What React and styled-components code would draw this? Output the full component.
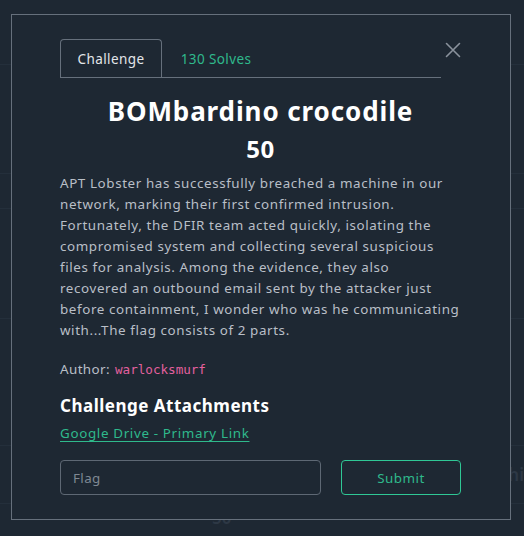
import React from 'react';
import styled, { createGlobalStyle } from 'styled-components';

const GlobalStyle = createGlobalStyle`
  html, body {
    margin: 0;
    padding: 0;
    background: #1e2833;
    width: 524px;
    height: 536px;
    overflow: hidden;
  }
  * { box-sizing: border-box; }
`;

const Page = styled.div`
  position: relative;
  width: 524px;
  height: 536px;
  background: #1e2833;
  font-family: 'Noto Sans', 'DejaVu Sans', sans-serif;
`;

/* faint table of challenges behind the dialog */
const Backdrop = styled.div`
  display: flex;
  flex-direction: column;
  opacity: 0.5;
`;

const BgRow = styled.div`
  height: ${p => p.h}px;
  border-bottom: ${p => (p.last ? 'none' : '1px solid #2a3644')};
  display: flex;
  align-items: center;
  justify-content: ${p => p.align || 'flex-start'};
  padding: 0 ${p => p.pad || 0}px;
  color: #3d4958;
  font-size: 17px;
  font-weight: 600;
`;

const Modal = styled.div`
  position: absolute;
  top: 14px;
  left: 11px;
  width: 500px;
  height: 506px;
  border: 1px solid #66707c;
  background: #1e2833;
  padding: 24px 49px 0 48px;
  display: flex;
  flex-direction: column;
`;

const Header = styled.div`
  display: flex;
  align-items: flex-start;
  gap: 4px;
`;

const Tabs = styled.div`
  flex: 1;
  display: flex;
  align-items: flex-end;
  border-bottom: 1px solid #66707c;
  height: 39px;
`;

const Tab = styled.div`
  height: 38px;
  display: flex;
  align-items: center;
  justify-content: center;
  width: ${p => p.w}px;
  font-size: 13.5px;
  letter-spacing: 0.4px;
  color: ${p => (p.active ? '#e3e6ea' : '#2fb98c')};
  border: 1px solid ${p => (p.active ? '#66707c' : 'transparent')};
  border-bottom: none;
  border-radius: 4px 4px 0 0;
`;

const Close = styled.button`
  width: 16px;
  height: 16px;
  margin-top: 3px;
  border: none;
  background: none;
  padding: 0;
  display: flex;
  align-items: center;
  justify-content: center;
  cursor: pointer;
`;

const Title = styled.h2`
  margin: 16px 0 0;
  text-align: center;
  color: #ffffff;
  font-size: 26px;
  font-weight: 700;
  line-height: 34px;
  letter-spacing: 0.9px;
`;

const Points = styled.div`
  text-align: center;
  color: #ffffff;
  font-size: 24px;
  font-weight: 700;
  line-height: 30px;
  margin-top: 6px;
  letter-spacing: 0.5px;
`;

const Description = styled.p`
  margin: 9px 0 0;
  color: #b9bfc7;
  font-size: 13.4px;
  line-height: 21px;
  letter-spacing: 0.6px;
`;

const Author = styled.div`
  margin-top: 18px;
  color: #b9bfc7;
  font-size: 13.4px;
  line-height: 20px;
  letter-spacing: 0.4px;
  display: flex;
  align-items: baseline;
  gap: 5px;
`;

const Handle = styled.span`
  font-family: 'DejaVu Sans Mono', 'Liberation Mono', monospace;
  font-size: 12.6px;
  color: #e3609f;
  letter-spacing: 0;
`;

const SectionTitle = styled.h3`
  margin: 14px 0 0;
  color: #ffffff;
  font-size: 17px;
  font-weight: 700;
  line-height: 24px;
  letter-spacing: 0.5px;
`;

const Link = styled.a`
  margin-top: 5px;
  align-self: flex-start;
  color: #2fb98c;
  font-size: 13.4px;
  line-height: 20px;
  letter-spacing: 0.65px;
  text-decoration: underline;
  text-underline-offset: 3px;
`;

const Form = styled.div`
  margin-top: 17px;
  display: flex;
  gap: 20px;
`;

const Input = styled.input`
  width: 261px;
  height: 35px;
  background: transparent;
  border: 1px solid #5e6874;
  border-radius: 4px;
  padding: 0 12px;
  color: #e3e6ea;
  font-family: inherit;
  font-size: 13.4px;
  letter-spacing: 0.4px;
  outline: none;
  &::placeholder { color: #7f8893; }
`;

const Submit = styled.button`
  width: 120px;
  height: 35px;
  background: transparent;
  border: 1px solid #2fc795;
  border-radius: 4px;
  color: #2fb98c;
  font-family: inherit;
  font-size: 13.4px;
  letter-spacing: 0.5px;
  cursor: pointer;
`;

export default function App() {
  return (
    <Page>
      <GlobalStyle />
      <Backdrop>
        <BgRow h={65} />
        <BgRow h={109} />
        <BgRow h={35} />
        <BgRow h={110} />
        <BgRow h={127} />
        <BgRow h={58} align="flex-end">Chi</BgRow>
        <BgRow h={26} pad={212} last>50</BgRow>
      </Backdrop>
      <Modal>
        <Header>
          <Tabs>
            <Tab active w={102}>Challenge</Tab>
            <Tab w={108}>130 Solves</Tab>
          </Tabs>
          <Close aria-label="Close">
            <svg width="16" height="16" viewBox="0 0 16 16">
              <path d="M1.5 1.5 L14.5 14.5 M14.5 1.5 L1.5 14.5" stroke="#8a929c" strokeWidth="1.6" strokeLinecap="round" />
            </svg>
          </Close>
        </Header>
        <Title>BOMbardino crocodile</Title>
        <Points>50</Points>
        <Description>
          APT Lobster has successfully breached a machine in our network, marking their first confirmed intrusion.
          Fortunately, the DFIR team acted quickly, isolating the compromised system and collecting several suspicious
          files for analysis. Among the evidence, they also recovered an outbound email sent by the attacker just before
          containment, I wonder who was he communicating with...The flag consists of 2 parts.
        </Description>
        <Author>
          Author: <Handle>warlocksmurf</Handle>
        </Author>
        <SectionTitle>Challenge Attachments</SectionTitle>
        <Link href="#">Google Drive - Primary Link</Link>
        <Form>
          <Input placeholder="Flag" />
          <Submit>Submit</Submit>
        </Form>
      </Modal>
    </Page>
  );
}
